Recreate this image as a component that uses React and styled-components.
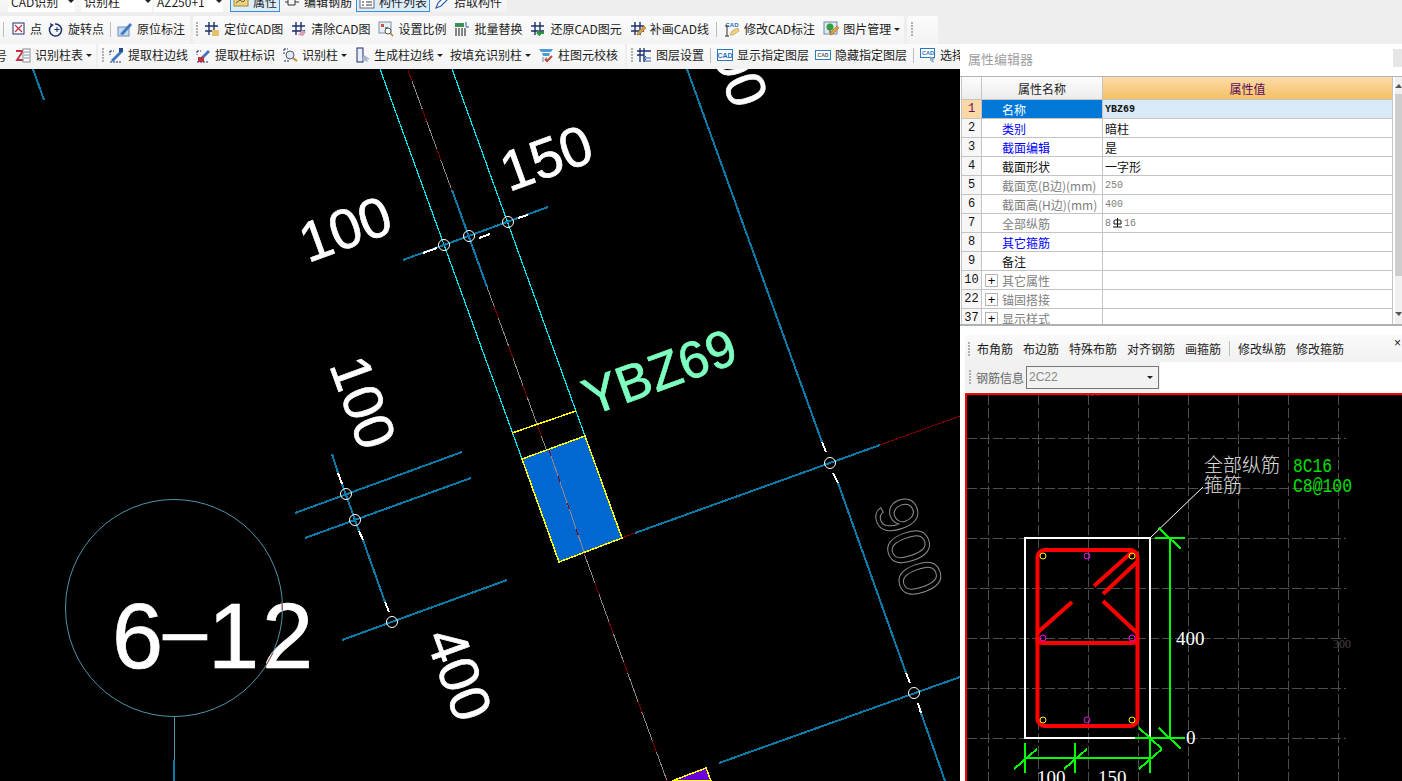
import React from 'react';
import styled, { createGlobalStyle } from 'styled-components';

const GlobalStyle = createGlobalStyle`
  html, body { margin: 0; padding: 0; height: 100%; overflow: hidden; }
  #root { height: 100%; }
  * { box-sizing: border-box; }
  body { font-family: "Noto Sans CJK SC", "Liberation Sans", sans-serif; font-size: 12px; color: #1c1c1c; }
`;

const Page = styled.div`
  width: 1402px;
  height: 781px;
  display: flex;
  flex-direction: column;
  background: #eeeeee;
  overflow: hidden;
`;
const TopRow = styled.div`
  height: 16px;
  flex: none;
  padding-bottom: 4px;
  display: flex;
  align-items: flex-end;
  overflow: hidden;
`;
const ToolRow = styled.div`
  height: ${p => p.$h}px;
  flex: none;
  display: flex;
  align-items: center;
  gap: ${p => p.$gap ?? 3}px;
  overflow: hidden;
`;
const Group = styled.div`
  height: 100%;
  width: ${p => (p.$w ? `${p.$w}px` : 'auto')};
  flex: ${p => (p.$grow ? 1 : 'none')};
  display: flex;
  align-items: center;
  gap: ${p => p.$gap ?? 8}px;
  padding: ${p => p.$pad ?? '0 4px'};
  background: linear-gradient(#fbfbfb, #f3f3f3);
  border-radius: 2px;
`;
const TopGroup = styled(Group)`
  height: 24px;
  & > div {
    padding-top: 3px;
  }
`;
const Item = styled.div`
  height: 24px;
  flex: none;
  display: flex;
  align-items: center;
  gap: 4px;
  white-space: nowrap;
  line-height: 1;
  padding: ${p => (p.$active ? '0 2px' : '0')};
  border: ${p => (p.$active ? '1px solid #3b8fd6' : 'none')};
  background: ${p => (p.$active ? '#dcecfa' : 'transparent')};
`;
const Combo = styled.div`
  width: ${p => p.$w}px;
  height: 24px;
  flex: none;
  margin-left: ${p => p.$ml ?? 0}px;
  display: flex;
  align-items: center;
  justify-content: space-between;
  padding: 0 1px 0 3px;
  background: #fff;
  white-space: nowrap;
`;
const Caret = styled.span`
  width: 0;
  height: 0;
  flex: none;
  margin-left: ${p => p.$ml ?? -1}px;
  border-left: 3px solid transparent;
  border-right: 3px solid transparent;
  border-top: 3px solid #222;
`;
const Sep = styled.span`
  width: 1px;
  height: 15px;
  flex: none;
  margin: 0 ${p => p.$m ?? 0}px;
  background: #bdbdbd;
`;
const Grip = styled.span`
  width: 2px;
  height: 14px;
  flex: none;
  margin-right: ${p => p.$mr ?? 0}px;
  background: repeating-linear-gradient(#b0b0b0 0 2px, transparent 2px 3px);
`;
const Clipped = styled.span`
  margin-left: -5px;
`;

const Body = styled.div`
  flex: 1;
  min-height: 0;
  display: flex;
`;
const LeftColumn = styled.div`
  width: 960px;
  flex: none;
  display: flex;
  flex-direction: column;
`;
const CadView = styled.svg`
  display: block;
  flex: 1;
  min-height: 0;
  width: 100%;
  background: #000;
`;
const CadText = styled.text`
  font-family: "Liberation Sans", Arial, sans-serif;
  font-size: ${p => p.$size ?? 56}px;
  fill: ${p => p.$fill ?? '#fff'};
  stroke: ${p => p.$fill ?? '#fff'};
  stroke-width: 0.7;
`;
const OutlineText = styled(CadText)`
  fill: none;
  stroke: #8c8c8c;
  stroke-width: 1;
`;
const SerifText = styled.text`
  font-family: "Liberation Serif", serif;
  font-size: ${p => p.$size ?? 19}px;
  fill: ${p => p.$fill ?? '#fff'};
`;
const MonoText = styled.text`
  font-family: "Liberation Mono", monospace;
  font-size: 20px;
  fill: #00e000;
`;
const SongText = styled.text`
  font-family: "Noto Sans CJK SC", sans-serif;
  font-size: 19px;
  font-weight: 300;
  fill: #e2e2e2;
`;

const Panel = styled.div`
  flex: 1;
  min-width: 0;
  display: flex;
  flex-direction: column;
  background: #fff;
`;
const PanelTitle = styled.div`
  height: 32px;
  flex: none;
  display: flex;
  align-items: center;
  justify-content: space-between;
  padding: 0 0 4px 8px;
  color: #a0a0a0;
  font-size: 13px;
`;
const CloseStub = styled.div`
  width: 9px;
  height: 18px;
  background: #e6e6e6;
`;
const GridWrap = styled.div`
  height: 250px;
  flex: none;
  display: flex;
  padding-left: 1px;
  border-top: 1px solid #b4b4b4;
  border-bottom: 2px solid #b0b0b0;
`;
const Grid = styled.div`
  width: 432px;
  flex: none;
  overflow: hidden;
`;
const GridRow = styled.div`
  display: grid;
  grid-template-columns: 21px 121px 1fr;
  height: ${p => p.$h ?? 19}px;
`;
const NumCell = styled.div`
  display: flex;
  align-items: center;
  justify-content: center;
  border-left: 1px solid #c4c4c4;
  border-right: 1px solid #c4c4c4;
  border-bottom: 1px solid #c4c4c4;
  background: ${p => (p.$on ? '#fbd9a4' : '#f7f7f7')};
  color: ${p => (p.$on ? '#6a0a6a' : '#111')};
  font-family: "Liberation Mono", monospace;
  font-size: 12px;
`;
const NameCell = styled.div`
  display: flex;
  align-items: center;
  gap: 4px;
  padding-left: ${p => (p.$tree ? '3px' : '20px')};
  border-right: 1px solid #c4c4c4;
  border-bottom: 1px solid #c4c4c4;
  background: ${p => (p.$on ? '#0078d7' : '#fff')};
  color: ${p => (p.$on ? '#fff' : p.$color)};
  white-space: nowrap;
`;
const ValueCell = styled.div`
  display: flex;
  align-items: center;
  padding-left: 2px;
  border-right: 1px solid #c4c4c4;
  border-bottom: 1px solid #c4c4c4;
  background: ${p => (p.$on ? '#d8e9f7' : '#fff')};
  color: ${p => p.$color ?? '#111'};
  font-size: ${p => (p.$latin ? '10px' : '12px')};
  font-family: ${p => (p.$latin ? '"Liberation Mono", monospace' : 'inherit')};
  font-weight: ${p => (p.$on ? 700 : 400)};
`;
const HeadNum = styled.div`
  border: 1px solid #c4c4c4;
  border-top: none;
  background: linear-gradient(#fdfdfd, #ececec);
`;
const HeadName = styled.div`
  display: flex;
  align-items: center;
  justify-content: center;
  font-size: 12px;
  border-right: 1px solid #c4c4c4;
  border-bottom: 1px solid #c4c4c4;
  background: linear-gradient(#fdfdfd, #ececec);
`;
const HeadValue = styled(HeadName)`
  background: linear-gradient(#fcdca8, #f3c064);
  color: #5c0a5c;
`;
const TreeBox = styled.span`
  width: 13px;
  height: 13px;
  flex: none;
  display: flex;
  align-items: center;
  justify-content: center;
  border: 1px solid #b4b4b4;
  color: #000;
  font-family: "Liberation Sans", sans-serif;
  font-size: 13px;
  line-height: 1;
`;
const GradeMark = styled.svg`
  flex: none;
  margin: 0 2px;
`;
const ScrollTrack = styled.div`
  width: 7px;
  margin-left: 2px;
  flex: none;
  display: flex;
  flex-direction: column;
  justify-content: space-between;
  background: #f0f0f0;
  position: relative;
`;
const ScrollThumb = styled.div`
  position: absolute;
  left: 0;
  right: 0;
  top: 17px;
  height: 182px;
  background: #cdcdcd;
`;
const ScrollArrow = styled.div`
  width: 0;
  height: 0;
  margin: ${p => (p.$up ? '7px 0 0 0' : '0 0 8px 0')};
  border-left: 4px solid transparent;
  border-right: 3px solid transparent;
  ${p => (p.$up ? 'border-bottom: 4px solid #555;' : 'border-top: 4px solid #555;')}
`;
const RebarBars = styled.div`
  height: 67px;
  flex: none;
  display: flex;
  flex-direction: column;
  padding: 9px 0 0 5px;
  background: #fff;
`;
const RebarRow = styled.div`
  position: relative;
  height: 27px;
  flex: none;
  display: flex;
  align-items: center;
  gap: 10px;
  padding-left: 3px;
  background: linear-gradient(#fafafa, #f1f1f1);
`;
const RebarClose = styled.span`
  position: absolute;
  right: 1px;
  top: 0;
  font-family: "Liberation Sans", sans-serif;
  font-size: 12px;
  line-height: 16px;
`;
const InfoRow = styled.div`
  width: 195px;
  height: 30px;
  flex: none;
  display: flex;
  align-items: center;
  gap: 5px;
  padding-left: 4px;
  background: #f0f0f0;
  color: #666;
`;
const InfoCombo = styled.div`
  width: 133px;
  height: 23px;
  margin-left: -3px;
  display: flex;
  align-items: center;
  justify-content: space-between;
  padding: 0 5px 0 2px;
  border: 1px solid #777;
  background: #f2f2f2;
  color: #888;
  font-family: "Liberation Sans", sans-serif;
  font-size: 12px;
`;
const SectionFrame = styled.div`
  flex: 1;
  min-height: 0;
  margin-left: 5px;
  border-left: 2px solid #f00;
  border-top: 2px solid #f00;
  background: #000;
`;
const SectionView = styled.svg`
  display: block;
  width: 100%;
  height: 100%;
`;

const NAVY = '#1c2f6b';
const Hash = () => (
  <path d="M5 1v13M10 1v13M1 5h13M1 10h13" stroke={NAVY} strokeWidth="1.4" fill="none" />
);
const Pencil = ({ color = '#e0a040' }) => (
  <path d="M7 14l1-3 6-6 2 2-6 6z" fill={color} stroke="#8a6a2a" strokeWidth=".6" />
);
const CadTag = ({ color = '#1f6fc0', y = 11, size = 6 }) => (
  <text x="8" y={y} fontFamily="Liberation Sans" fontSize={size} fontWeight="700" fill={color} textAnchor="middle">CAD</text>
);

const ICONS = {
  boxX: <><rect x="3" y="2" width="11" height="11" fill="#fff" stroke={NAVY} /><path d="M5 4l7 7M12 4l-7 7" stroke="#c03040" strokeWidth="1.2" /></>,
  rotate: <><path d="M3 5a6 6 0 1 0 4-2" fill="none" stroke={NAVY} strokeWidth="1.5" /><path d="M2 2l1 4 3-2z" fill={NAVY} /><path d="M9 6v5M6.500 8.500h5" stroke={NAVY} /></>,
  mark: <><rect x="1" y="6" width="11" height="9" fill="#c8d8ee" stroke="#6d8fbc" /><path d="M3 13L13 2l2 2L6 14z" fill="#3f78c0" /></>,
  locate: <><Hash /><rect x="8" y="9" width="7" height="6" fill="#e8c26a" /></>,
  clear: <><Hash /><path d="M7 14l4-5 4 2-3 4z" fill="#d8a0b0" /></>,
  scale: <><rect x="1" y="1" width="12" height="11" fill="#e8eef6" stroke="#7a8fa8" /><rect x="3" y="3" width="3" height="3" fill="#d05040" /><rect x="7" y="6" width="3" height="3" fill="#50a050" /><circle cx="10" cy="10" r="3" fill="#fff" stroke="#555" /><path d="M12 12l3 3" stroke="#b08030" strokeWidth="1.6" /></>,
  replace: <><rect x="1" y="2" width="9" height="4" fill="#3f8f5a" /><path d="M2 7v8M5 7v8M8 7v8M11 7v8" stroke="#555" strokeWidth="1.4" /><path d="M12 1v5h3" fill="none" stroke="#2a60b0" /></>,
  restore: <><Hash /><path d="M8 12h6M10 9.500l-2.500 2.500 2.500 2.500" stroke="#2a9a3a" strokeWidth="1.8" fill="none" /></>,
  draw: <><Hash /><Pencil /></>,
  cadEdit: <><CadTag y="6" /><path d="M3 5v10M1 5h4M1 15h4" stroke="#333" /><path d="M6 14l2-4 6-3 1 3-6 4z" fill="#efd27a" stroke="#a5873a" strokeWidth=".5" /></>,
  image: <><rect x="1" y="1" width="13" height="12" fill="#dfe8f4" stroke="#6f88aa" /><circle cx="7" cy="6" r="3.500" fill="#35a040" /><path d="M7 8v4" stroke="#765" strokeWidth="1.500" /><Pencil /></>,
  zTable: <><path d="M1 4h7L2 13h7" fill="none" stroke="#c03040" strokeWidth="1.800" /><rect x="8" y="2" width="7" height="13" fill="#fff" stroke="#8a8a8a" /><path d="M9 5h5M9 8h5M9 11h5" stroke="#7a90b0" /></>,
  edge: <><path d="M2 4h4M2 4v4M2 15h12" stroke={NAVY} strokeDasharray="2 1" /><path d="M3 13L13 3l2 2L5 15z" fill="#3f78c0" /><rect x="11" y="1" width="4" height="4" fill="#1f4f90" /></>,
  edgeId: <><path d="M2 4h4M2 4v4M2 15h12" stroke={NAVY} strokeDasharray="2 1" /><path d="M5 11L13 3l2 2-8 8z" fill="#3f78c0" /><rect x="3" y="10" width="6" height="5" fill="#c03040" /></>,
  recog: <><path d="M2 2v5M2 2h4M2 14h5" stroke={NAVY} strokeDasharray="2 1" /><circle cx="8" cy="8" r="4" fill="#dfe8f4" stroke="#556" /><path d="M11 11l4 3" stroke="#c09030" strokeWidth="2" /></>,
  genEdge: <><rect x="3" y="1" width="6" height="14" fill="#e8eef6" stroke={NAVY} /><path d="M10 8l6 4-3 .5 1 2.500-6-2z" fill="#a8b8cc" /></>,
  check: <><path d="M1 2h14l-2 3H3zM4 6h8l-1 3H5z" fill="#4f9ad0" /><path d="M5 10v5M8 10l1 5" stroke="#7a8a9a" /><path d="M7 12l2 2 5-5" fill="none" stroke="#c04a3a" strokeWidth="2" /></>,
  layer: <><path d="M4 1v14M8 1v14M1 4h14M1 8h7" stroke={NAVY} strokeWidth="1.300" fill="none" /><path d="M8 11h7M8 14h7M10 9l-2 2 2 2" stroke="#2a60b0" fill="none" /></>,
  cadBox: <><rect x=".5" y="2.500" width="15" height="11" fill="#fff" stroke="#2a7ac0" /><CadTag size="7" y="10.500" /></>,
  cadThin: <><rect x=".5" y="3.500" width="15" height="9" fill="#fff" stroke="#2a7ac0" /><CadTag size="5" color="#555" y="9.500" /></>,
  cadPick: <><rect x=".5" y="1.500" width="14" height="9" fill="#fff" stroke="#2a7ac0" /><CadTag size="5.500" y="8" /><path d="M10 9l5 3-2 .5 1 2.500-2 .5-1-2.500-1 1z" fill="#8fa8c4" /></>,
  attr: <><rect x="1" y="2" width="14" height="10" fill="#efd27a" stroke="#a5873a" /><path d="M3 9l4-3 3 2 4-4" stroke="#555" fill="none" /></>,
  bars: <><path d="M1 8h3M11 8h4M4 5h7v6H4z" stroke="#333" fill="none" /></>,
  list: <><rect x="1" y="2" width="14" height="12" fill="#fff" stroke="#667" /><path d="M3 5h2M3 8h2M3 11h2M7 5h6M7 8h6M7 11h6" stroke="#334" /></>,
  pick: <path d="M2 14l2-5 7-7 3 3-7 7z" fill="#fff" stroke="#2a60b0" strokeWidth="1.200" />,
};

const Icon = ({ name }) => (
  <svg width="16" height="16" viewBox="0 0 16 16" style={{ flex: 'none' }}>{ICONS[name]}</svg>
);

const Tool = ({ icon, label, caret, active }) => (
  <Item $active={active}>
    {icon && <Icon name={icon} />}
    <span>{label}</span>
    {caret && <Caret />}
  </Item>
);

const RoadPaths = () => (
  <g fill="none" shapeRendering="crispEdges">
    <path stroke="#00e8f0" strokeWidth="1.2" d="M380 69L522 459M452 69L585 436" />
    <path stroke="#8a8a8a" strokeWidth="1" d="M408 70L667 781" />
    <path stroke="#800000" strokeWidth="1" strokeDasharray="12 30" d="M408 70L667 781" />
    <path stroke="#0a7aa8" strokeWidth="2" d="M33 69L44 100M403 260L548 207M452 190L487 287M687 69L822 442M838 483L906 673M921 713L945 781M635 533L880 445M719 763L960 677M332 454L338 473M342 484L359 531M363 540L385 602M295 513L462 452M305 538L471 478M342 640L507 580" />
    <path stroke="#fff" strokeWidth="2" d="M423 253L437 248M479 238L490 234M518 218L528 215M822 442L826 452M833 473L838 483M906 673L910 683M918 703L921 713M338 473L342 484M359 531L363 540M385 602L389 612" />
    <path stroke="#800000" strokeWidth="1" d="M622 538L635 533M880 445L960 416" />
    <path stroke="#4f93ad" strokeWidth="1" d="M174 717V781" />
    <path stroke="#0a7aa8" strokeWidth="2" d="M174 760V781" />
  </g>
);

const ColumnBlocks = () => (
  <g shapeRendering="crispEdges">
    <polygon points="522,459 585,436 622,538 559,562" fill="#0068d0" stroke="#ffff00" strokeWidth="1.500" />
    <path d="M512 433L576 411" stroke="#ffff00" strokeWidth="1.500" fill="none" />
    <path stroke="#8a8a8a" fill="none" d="M549 450L584 552" />
    <path stroke="#800000" strokeDasharray="6 22" fill="none" d="M549 450L584 552" />
    <polygon points="672,781 706,768 711,781" fill="#6a00d8" stroke="#ffff00" strokeWidth="1.500" />
  </g>
);

const Nodes = () => (
  <g fill="none" stroke="#fff">
    {[[444, 245], [469, 236], [508, 222], [830, 463], [914, 693], [346, 494], [355, 520], [392, 622]].map(([x, y]) => (
      <circle key={`${x}-${y}`} cx={x} cy={y} r="5.500" />
    ))}
  </g>
);

const MainCad = () => (
  <CadView viewBox="0 69 960 712" preserveAspectRatio="none">
    <RoadPaths />
    <ColumnBlocks />
    <Nodes />
    <CadText transform="translate(308,263) rotate(-20)">100</CadText>
    <CadText transform="translate(509,192) rotate(-20)">150</CadText>
    <CadText $size={52} $fill="#7dffc0" transform="translate(591,416) rotate(-20)">YBZ69</CadText>
    <CadText transform="translate(329,365) rotate(70)">100</CadText>
    <CadText transform="translate(425,637) rotate(70)">400</CadText>
    <CadText transform="translate(701,23) rotate(70)">900</CadText>
    <OutlineText $size={60} transform="translate(872,507) rotate(70)">900</OutlineText>
    <CadText $size={92}>
      <tspan x="112" y="668">6</tspan>
      <tspan x="163" y="658" fontSize="79">–</tspan>
      <tspan x="208" y="668">1</tspan>
      <tspan x="262" y="668">2</tspan>
    </CadText>
    <circle cx="174" cy="608" r="108.500" fill="none" stroke="#4f93ad" />
    <path d="M282 602V610M265 667L273 653" stroke="#a05040" fill="none" />
  </CadView>
);

const GRID_X = [988, 1038, 1088, 1138, 1188, 1238, 1288, 1338];
const GRID_Y = [438, 488, 538, 588, 638, 688, 738];
const BARS = [
  [1043, 556, '#ffff00'], [1087, 556, '#ff00ff'], [1132, 556, '#ffff00'],
  [1043, 638, '#ff00ff'], [1132, 638, '#ff00ff'],
  [1043, 720, '#ffff00'], [1087, 720, '#ff00ff'], [1132, 720, '#ffff00'],
];

const SectionCad = () => (
  <SectionView viewBox="967 395 435 386">
    <g stroke="#4e4e4e" strokeDasharray="10 3" shapeRendering="crispEdges">
      {GRID_X.map(x => <line key={x} x1={x} x2={x} y1="395" y2="781" />)}
      {GRID_Y.map(y => <line key={y} y1={y} y2={y} x1="967" x2="1346" />)}
    </g>
    <SerifText $size={12} $fill="#555" x="1083" y="396">400</SerifText>
    <SerifText $size={10} $fill="#555" x="1089" y="645">0</SerifText>
    <SerifText $size={12} $fill="#444" x="1333" y="648">300</SerifText>
    <rect x="1025" y="538" width="125" height="200" fill="none" stroke="#fff" strokeWidth="2" shapeRendering="crispEdges" />
    <path d="M1151 537L1203 487" stroke="#fff" fill="none" />
    <g fill="none" stroke="#f00" strokeWidth="4">
      <rect x="1037.500" y="550" width="100" height="176" rx="7" />
      <path d="M1037 637q0 6 6 6H1132q6 0 6-6" />
      <path d="M1037 633L1072 602M1094 586L1132 552M1103 594L1137 562M1103 601L1137 633" />
    </g>
    {BARS.map(([x, y, c]) => (
      <circle key={`${x}-${y}`} cx={x} cy={y} r="3" fill="none" stroke={c} />
    ))}
    <g fill="none" stroke="#00ff00" strokeWidth="2" shapeRendering="crispEdges">
      <path d="M1170 538V738M1155 538H1185M1159 528L1181 549M1135 738H1185M1159 728L1181 749" />
      <path d="M1025 758H1150M1025 743V773M1075 743V773M1150 738V773M1014 769L1037 749M1064 769L1087 749M1139 769L1162 749M1139 728L1162 749" />
    </g>
    <SongText x="1204" y="472">全部纵筋</SongText>
    <SongText x="1204" y="492">箍筋</SongText>
    <MonoText x="1293" y="472" textLength="39" lengthAdjust="spacingAndGlyphs">8C16</MonoText>
    <MonoText x="1293" y="492" textLength="59" lengthAdjust="spacingAndGlyphs">C8@100</MonoText>
    <SerifText x="1176" y="645">400</SerifText>
    <SerifText x="1186" y="744">0</SerifText>
    <SerifText x="1037" y="784">100</SerifText>
    <SerifText x="1098" y="784">150</SerifText>
  </SectionView>
);

const BLUE = '#0000ff';
const BLACK = '#111';
const GREY = '#808080';
const ROWS = [
  { n: 1, name: '名称', color: BLACK, value: 'YBZ69', latin: true, on: true },
  { n: 2, name: '类别', color: BLUE, value: '暗柱' },
  { n: 3, name: '截面编辑', color: BLUE, value: '是' },
  { n: 4, name: '截面形状', color: BLACK, value: '一字形' },
  { n: 5, name: '截面宽(B边)(mm)', color: GREY, value: '250', latin: true, vc: GREY },
  { n: 6, name: '截面高(H边)(mm)', color: GREY, value: '400', latin: true, vc: GREY },
  { n: 7, name: '全部纵筋', color: GREY, value: 'rebar', latin: true, vc: GREY },
  { n: 8, name: '其它箍筋', color: BLUE },
  { n: 9, name: '备注', color: BLACK },
  { n: 10, name: '其它属性', color: GREY, tree: true },
  { n: 22, name: '锚固搭接', color: GREY, tree: true },
  { n: 37, name: '显示样式', color: GREY, tree: true },
];

const RebarValue = () => (
  <>
    8
    <GradeMark width="9" height="10" viewBox="0 0 9 10">
      <path d="M1 3q0-1 1.500-1h4q1.500 0 1.500 1v3H1zM4.500 0v9M0 9h9" fill="none" stroke="#111" />
    </GradeMark>
    16
  </>
);

const AttrGrid = () => (
  <GridWrap>
    <Grid>
      <GridRow $h={23}>
        <HeadNum />
        <HeadName>属性名称</HeadName>
        <HeadValue>属性值</HeadValue>
      </GridRow>
      {ROWS.map(r => (
        <GridRow key={r.n}>
          <NumCell $on={r.on}>{r.n}</NumCell>
          <NameCell $on={r.on} $color={r.color} $tree={r.tree}>
            {r.tree && <TreeBox>+</TreeBox>}
            {r.name}
          </NameCell>
          <ValueCell $on={r.on} $latin={r.latin} $color={r.vc}>
            {r.value === 'rebar' ? <RebarValue /> : r.value}
          </ValueCell>
        </GridRow>
      ))}
    </Grid>
    <ScrollTrack>
      <ScrollThumb />
      <ScrollArrow $up />
      <ScrollArrow />
    </ScrollTrack>
  </GridWrap>
);

export default function App() {
  return (
    <Page>
      <GlobalStyle />
      <TopRow>
        <TopGroup $gap={0} $pad="0 0 0 8px" $w={224}>
          <Combo $w={67}>CAD识别<Caret $ml={0} /></Combo>
          <Combo $w={71} $ml={6}>识别柱<Caret $ml={0} /></Combo>
          <Combo $w={69} $ml={2}>AZ250+1<Caret $ml={0} /></Combo>
        </TopGroup>
        <TopGroup $gap={4} $pad="0 0 0 6px" $w={283}>
          <Tool icon="attr" label="属性" active />
          <Tool icon="bars" label="编辑钢筋" />
          <Tool icon="list" label="构件列表" active />
          <Tool icon="pick" label="拾取构件" />
        </TopGroup>
      </TopRow>
      <ToolRow $h={28}>
        <Group $w={190} $gap={6} $pad="0 0 2px 3px">
          <Sep />
          <Tool icon="boxX" label="点" />
          <Tool icon="rotate" label="旋转点" />
          <Sep />
          <Tool icon="mark" label="原位标注" />
        </Group>
        <Group $w={711} $pad="0 0 2px 3px" $gap={8}>
          <Grip $mr={-2} />
          <Tool icon="locate" label="定位CAD图" />
          <Tool icon="clear" label="清除CAD图" />
          <Tool icon="scale" label="设置比例" />
          <Tool icon="replace" label="批量替换" />
          <Tool icon="restore" label="还原CAD图元" />
          <Tool icon="draw" label="补画CAD线" />
          <Sep $m={-1} />
          <Tool icon="cadEdit" label="修改CAD标注" />
          <Tool icon="image" label="图片管理" caret />
        </Group>
        <Group $w={31} $pad="0 0 2px 4px">
          <Grip />
        </Group>
      </ToolRow>
      <Body>
        <LeftColumn>
          <ToolRow $h={25} $gap={2}>
            <Group $w={96} $pad="0 0 3px 0">
              <Clipped>号</Clipped>
              <Tool icon="zTable" label="识别柱表" caret />
            </Group>
            <Group $w={527} $pad="0 0 3px 4px" $gap={7}>
              <Grip $mr={-3} />
              <Tool icon="edge" label="提取柱边线" />
              <Tool icon="edgeId" label="提取柱标识" />
              <Tool icon="recog" label="识别柱" caret />
              <Tool icon="genEdge" label="生成柱边线" caret />
              <Tool label="按填充识别柱" caret />
              <Tool icon="check" label="柱图元校核" />
            </Group>
            <Group $grow $pad="0 0 3px 4px" $gap={6}>
              <Grip $mr={-3} />
              <Tool icon="layer" label="图层设置" />
              <Sep />
              <Tool icon="cadBox" label="显示指定图层" />
              <Tool icon="cadThin" label="隐藏指定图层" />
              <Sep />
              <Tool icon="cadPick" label="选择" />
            </Group>
          </ToolRow>
          <MainCad />
        </LeftColumn>
        <Panel>
          <PanelTitle>
            属性编辑器
            <CloseStub />
          </PanelTitle>
          <AttrGrid />
          <RebarBars>
            <RebarRow>
              <Grip $mr={-3} />
              <span>布角筋</span>
              <span>布边筋</span>
              <span>特殊布筋</span>
              <span>对齐钢筋</span>
              <span>画箍筋</span>
              <Sep $m={-2} />
              <span>修改纵筋</span>
              <span>修改箍筋</span>
              <RebarClose>×</RebarClose>
            </RebarRow>
            <InfoRow>
              <Grip />
              <span>钢筋信息</span>
              <InfoCombo>2C22<Caret /></InfoCombo>
            </InfoRow>
          </RebarBars>
          <SectionFrame>
            <SectionCad />
          </SectionFrame>
        </Panel>
      </Body>
    </Page>
  );
}
